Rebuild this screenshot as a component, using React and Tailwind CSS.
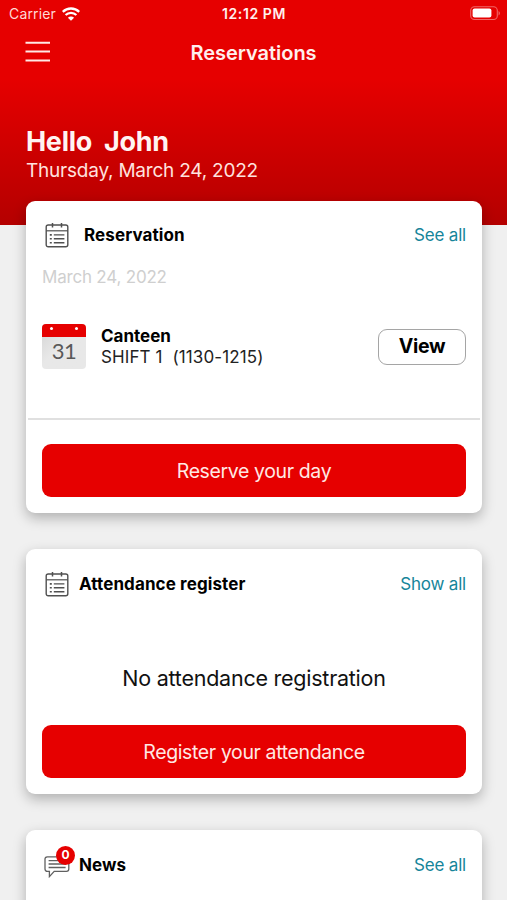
import clsx from 'clsx';

const WifiIcon = () => (
  <svg width="18" height="14" viewBox="0 0 18 14" className="block" fill="none" stroke="#fff" strokeWidth="2.3">
    <path d="M.8 4.8C5.4.4 12.6.4 17.2 4.8" />
    <path d="M3.6 8c3-2.9 7.8-2.9 10.8 0" />
    <path d="M9 13.8 5.9 10.7c1.8-1.6 4.4-1.6 6.2 0Z" fill="#fff" stroke="none" />
  </svg>
);

const BatteryIcon = () => (
  <svg width="31" height="15" viewBox="0 0 31 15" className="block" fill="none">
    <rect x=".7" y=".7" width="26.6" height="12.8" rx="3.8" stroke="#fff" strokeOpacity=".4" strokeWidth="1.1" />
    <rect x="2.6" y="2.6" width="18.8" height="9" rx="2" fill="#fff" />
    <path d="M28.6 5v4.4c1.6-.7 1.6-3.7 0-4.4Z" fill="#fff" fillOpacity=".45" />
  </svg>
);

const MenuIcon = () => (
  <svg width="26" height="22" viewBox="0 0 26 22" className="-mt-[2px] block" stroke="#ffe9e5" strokeWidth="2">
    <path d="M.5 1.8h24.5M.5 10.6h24.5M.5 19.4h24.5" />
  </svg>
);

const CalendarIcon = () => (
  <svg width="24" height="26" viewBox="0 0 24 26" className="block" fill="none" stroke="#505050" strokeWidth="1.4">
    <rect x="1.2" y="3" width="21.6" height="21.8" rx="2" />
    <path d="M1.2 8.8h21.6" strokeWidth="1.2" />
    <path d="M7.5 1v4.6M16.5 1v4.6" strokeWidth="1.5" />
    <path d="M8.8 12.9h10.6M8.8 16.8h10.6M8.8 20.7h10.6" strokeWidth="1.4" />
    <path d="M4.8 12.9h2M4.8 16.8h2M4.8 20.7h2" strokeWidth="1.6" />
  </svg>
);

const NewsIcon = () => (
  <svg width="26" height="22" viewBox="0 0 26 22" className="block" fill="none" stroke="#606060" strokeWidth="1.3">
    <path d="M3.3.8h19.2a2.3 2.3 0 0 1 2.3 2.3v10a2.3 2.3 0 0 1-2.3 2.3H10.2L5.4 20.6v-5.2H3.3A2.3 2.3 0 0 1 1 13.1v-10A2.3 2.3 0 0 1 3.3.8Z" />
    <path d="M4.6 4.6h15M4.6 8h17M4.6 11.5h17" />
  </svg>
);

const Card = ({ className, children }) => (
  <section className={clsx('rounded-[9px] bg-white shadow-[0_5px_13px_rgba(0,0,0,0.27)]', className)}>
    {children}
  </section>
);

const CardHeader = ({ icon, title, link, gap }) => (
  <div className="flex h-[26px] items-center pl-[19px] pr-4">
    {icon}
    <h2 className={clsx('text-[17px] font-bold leading-[26px] tracking-[0.1px] text-black', gap)}>{title}</h2>
    <a href="#" className="ml-auto text-[17px] leading-[26px] tracking-[-0.2px] text-[#16859a]">{link}</a>
  </div>
);

const RedButton = ({ children }) => (
  <button type="button" className="mx-4 h-[53px] rounded-[9px] bg-[#e60000] pt-[2px] text-[19.5px] tracking-[-0.38px] text-[#ffe8e4]">
    {children}
  </button>
);

const App = () => {
  return (
    <div className="h-[900px] w-full overflow-hidden bg-[#f0f0f0] font-[Inter,sans-serif]">
      <header className="h-[225px] bg-linear-to-b from-[#e60000] from-35% to-[#b40000] text-white">
        {/* Status bar */}
        <div className="grid h-[27px] grid-cols-3 items-center pl-[9px] pr-[6px]">
          <div className="flex items-center gap-[6px]">
            <span className="text-[14px] tracking-[0.15px] text-[#ffd9d5]">Carrier</span>
            <WifiIcon />
          </div>
          <span className="-ml-[2px] text-center text-[14px] font-semibold tracking-[0.6px] text-[#fff0ee]">12:12 PM</span>
          <div className="flex justify-end">
            <BatteryIcon />
          </div>
        </div>

        {/* Title bar */}
        <div className="mt-px grid h-[50px] grid-cols-[1fr_auto_1fr] items-center pl-[25px] pr-[25px]">
          <button type="button" aria-label="Menu" className="justify-self-start">
            <MenuIcon />
          </button>
          <h1 className="text-[20px] font-semibold tracking-[-0.02px] text-[#ffefed]">Reservations</h1>
        </div>

        <div className="px-[26px] pt-[47px]">
          <p className="text-[27px] font-bold leading-[34px] tracking-[-0.3px] text-[#fff4f2] [word-spacing:6px]">Hello John</p>
          <p className="text-[19px] leading-6 tracking-[-0.22px] text-[#ffe2df]">Thursday, March 24, 2022</p>
        </div>
      </header>

      <main className="relative -mt-6 flex flex-col gap-9 px-[26px] pr-[25px]">
        <Card className="flex h-[312px] flex-col pt-[21px]">
          <CardHeader icon={<CalendarIcon />} title="Reservation" link="See all" gap="ml-[15px]" />
          <p className="mt-[17px] pl-4 text-[17px] leading-6 tracking-[-0.2px] text-[#cfcfcf]">March 24, 2022</p>

          <div className="mt-[35px] flex items-center pl-4 pr-4">
            <div className="flex h-[45px] w-[44px] flex-col overflow-hidden rounded-[4px] bg-linear-to-br from-[#d4d4d4] to-[#e8e8e8] to-45%">
              <div className="flex h-[13px] justify-between bg-[#e60000] px-2 pt-[3px]">
                <span className="size-[3px] rounded-full bg-white" />
                <span className="size-[3px] rounded-full bg-white" />
              </div>
              <span className="text-center font-[Lato,sans-serif] text-[22px] leading-[28px] -tracking-[0.5px] text-[#595959]">31</span>
            </div>
            <div className="ml-[15px] text-[17px] leading-[21px] text-black">
              <p className="font-bold">Canteen</p>
              <p className="whitespace-pre tracking-[0.12px] text-[#222]">{'SHIFT 1  (1130-1215)'}</p>
            </div>
            <button type="button" className="ml-auto h-[36px] w-[88px] rounded-[9px] border-[1.5px] border-[#a5a5a5] pt-px text-[19.5px] font-bold tracking-[-0.3px] text-black">
              View
            </button>
          </div>

          <div className="mx-[2px] mb-6 mt-auto h-[2px] bg-[#e0e0e0]" />
          <div className="mb-4 flex flex-col">
            <RedButton>Reserve your day</RedButton>
          </div>
        </Card>

        <Card className="flex h-[245px] flex-col pt-[22px]">
          <CardHeader icon={<CalendarIcon />} title="Attendance register" link="Show all" gap="ml-[10px]" />
          <p className="mt-auto mb-[32px] text-center text-[21.5px] leading-[30px] tracking-[-0.24px] text-[#111]">
            No attendance registration
          </p>
          <div className="mb-4 flex flex-col">
            <RedButton>Register your attendance</RedButton>
          </div>
        </Card>

        <Card className="h-[200px] pt-[22px]">
          <CardHeader
            icon={
              <div className="relative -ml-px pt-[3px]">
                <NewsIcon />
                <span className="absolute -top-[7px] left-[12px] flex size-[19px] items-center justify-center rounded-full bg-[#e60000] text-[12px] font-bold text-white">
                  0
                </span>
              </div>
            }
            title="News"
            link="See all"
            gap="ml-[9px]"
          />
        </Card>
      </main>
    </div>
  );
};

export default App;
